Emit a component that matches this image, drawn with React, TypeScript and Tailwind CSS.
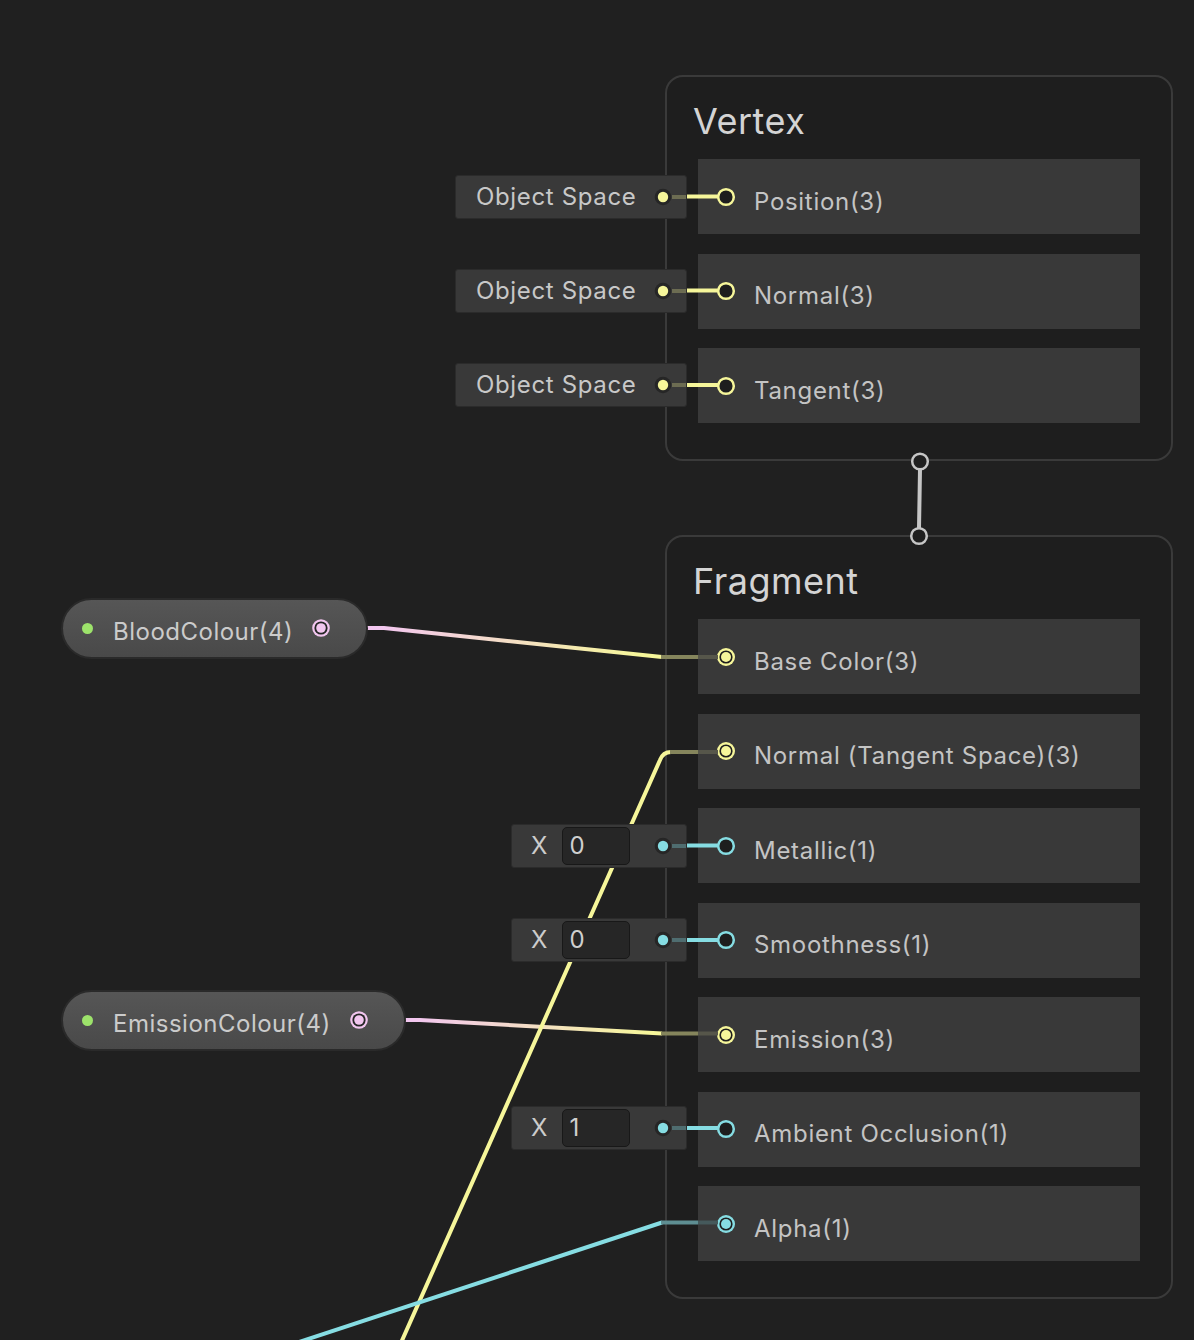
import type { ReactNode } from "react";

type Slot = { label: string; color: string; linked?: boolean };

const YELLOW = "#f6f69a";
const CYAN = "#86dde3";
const PINK = "#f2c6ef";

const vertexSlots: Slot[] = [
  { label: "Position(3)", color: YELLOW },
  { label: "Normal(3)", color: YELLOW },
  { label: "Tangent(3)", color: YELLOW },
];

const fragmentSlots: Slot[] = [
  { label: "Base Color(3)", color: YELLOW, linked: true },
  { label: "Normal (Tangent Space)(3)", color: YELLOW, linked: true },
  { label: "Metallic(1)", color: CYAN },
  { label: "Smoothness(1)", color: CYAN },
  { label: "Emission(3)", color: YELLOW, linked: true },
  { label: "Ambient Occlusion(1)", color: CYAN },
  { label: "Alpha(1)", color: CYAN, linked: true },
];

function PortRing({ color, linked }: { color: string; linked?: boolean }) {
  return (
    <svg width="20" height="20" viewBox="0 0 20 20" className="shrink-0">
      {linked ? (
        <>
          <circle cx="10" cy="10" r="9" fill={color} />
          <circle cx="10" cy="10" r="6.6" fill="#1e1e1e" />
          <circle cx="10" cy="10" r="5" fill={color} />
        </>
      ) : (
        <circle cx="10" cy="10" r="7.8" fill="#1e1e1e" stroke={color} strokeWidth="2.5" />
      )}
    </svg>
  );
}

function OutDot({ color }: { color: string }) {
  return (
    <svg width="18" height="18" viewBox="0 0 18 18" className="shrink-0">
      <circle cx="9" cy="9" r="8.3" fill="#262626" />
      <circle cx="9" cy="9" r="5.2" fill={color} />
    </svg>
  );
}

function Block({ title, slots, pos }: { title: string; slots: Slot[]; pos: string }) {
  return (
    <div className={`absolute ${pos} w-[508px] rounded-[18px] border-2 border-[#3a3a3a] bg-[#1e1e1e] pt-[22px] pb-[36px] px-[31px]`}>
      <div className="-ml-[5px] text-[36px] leading-[44px] text-[#d4d4d4] tracking-[0.5px]">{title}</div>
      <div className="mt-[16px] flex flex-col gap-[19.5px]">
        {slots.map((s) => (
          <div key={s.label} className="h-[75px] bg-[#393939] flex items-center pl-[18px]">
            <PortRing color={s.color} linked={s.linked} />
            <span className="ml-[18px] mt-[10px] text-[24px] leading-none text-[#c4c4c4] tracking-[0.7px]">{s.label}</span>
          </div>
        ))}
      </div>
    </div>
  );
}

function SpaceNode({ pos }: { pos: string }) {
  return (
    <div className={`absolute ${pos} left-[455px] w-[232px] h-[44px] rounded-[3px] border border-[#2b2b2b] bg-[#393939] flex items-center pl-[20px]`}>
      <span className="text-[24px] leading-none text-[#c8c8c8] tracking-[0.65px]">Object Space</span>
      <div className="ml-auto flex items-center">
        <OutDot color={YELLOW} />
        <div className="h-[4px] w-[14px] bg-[#6c6c52]" />
      </div>
    </div>
  );
}

function ValueNode({ pos, value }: { pos: string; value: string }) {
  return (
    <div className={`absolute ${pos} left-[511px] w-[176px] h-[44px] rounded-[3px] border border-[#2b2b2b] bg-[#393939] flex items-center pl-[19px]`}>
      <span className="text-[24px] leading-none text-[#cccccc]">X</span>
      <div className="ml-[15px] h-[38px] w-[68px] rounded-[5px] border border-[#181818] bg-[#262626] flex items-center pl-[6px] text-[24px] text-[#cfcfcf]">
        {value}
      </div>
      <div className="ml-auto flex items-center">
        <OutDot color={CYAN} />
        <div className="h-[4px] w-[14px] bg-[#4f6d70]" />
      </div>
    </div>
  );
}

function PropertyPill({ pos, label, width }: { pos: string; label: string; width: string }) {
  return (
    <div className={`absolute ${pos} left-[61px] ${width} h-[61px] rounded-full border-2 border-[#2a2a2a] bg-gradient-to-b from-[#565656] to-[#494949] flex items-center pl-[19px] pr-[35px]`}>
      <span className="w-[11px] h-[11px] rounded-full bg-[#9de36b] shrink-0" />
      <span className="ml-[20px] mt-[6px] text-[24px] leading-none text-[#cbcbcb] tracking-[0.5px]">{label}</span>
      <svg width="20" height="20" viewBox="0 0 20 20" className="ml-auto shrink-0 -mt-[1px]">
        <circle cx="10" cy="10" r="8.8" fill={PINK} />
        <circle cx="10" cy="10" r="6.6" fill="#262626" />
        <circle cx="10" cy="10" r="4.8" fill={PINK} />
      </svg>
    </div>
  );
}

function Wires(): ReactNode {
  return (
    <svg className="absolute inset-0 pointer-events-none" width="1194" height="1340" viewBox="0 0 1194 1340">
      <defs>
        <linearGradient id="g1" gradientUnits="userSpaceOnUse" x1="380" y1="0" x2="640" y2="0">
          <stop offset="0" stopColor={PINK} />
          <stop offset="1" stopColor={YELLOW} />
        </linearGradient>
        <linearGradient id="g2" gradientUnits="userSpaceOnUse" x1="415" y1="0" x2="650" y2="0">
          <stop offset="0" stopColor={PINK} />
          <stop offset="1" stopColor={YELLOW} />
        </linearGradient>
      </defs>

      {/* vertex stubs */}
      {[196.5, 290.5, 385].map((y) => (
        <line key={y} x1="686" y1={y} x2="719" y2={y} stroke={YELLOW} strokeWidth="4" />
      ))}
      {/* value stubs */}
      {[845.5, 940, 1128].map((y) => (
        <line key={y} x1="686" y1={y} x2="719" y2={y} stroke={CYAN} strokeWidth="4" />
      ))}

      {/* BloodColour -> Base Color */}
      <polyline points="366,628 384,628 662,657" fill="none" stroke="url(#g1)" strokeWidth="4" strokeLinejoin="round" />
      <line x1="661" y1="657" x2="698" y2="657" stroke="#85855c" strokeWidth="4" />
      <line x1="698" y1="657" x2="718" y2="657" stroke="#56564a" strokeWidth="4" />

      {/* EmissionColour -> Emission */}
      <polyline points="404,1020 420,1020 662,1033.5" fill="none" stroke="url(#g2)" strokeWidth="4" strokeLinejoin="round" />
      <line x1="661" y1="1033.5" x2="698" y2="1033.5" stroke="#85855c" strokeWidth="4" />
      <line x1="698" y1="1033.5" x2="718" y2="1033.5" stroke="#56564a" strokeWidth="4" />

      {/* long yellow -> Normal (Tangent Space) */}
      <path d="M400 1345 L660 760 Q663 752 671 752" fill="none" stroke={YELLOW} strokeWidth="4" />
      <line x1="670" y1="752" x2="698" y2="752" stroke="#85855c" strokeWidth="4" />
      <line x1="698" y1="752" x2="718" y2="752" stroke="#56564a" strokeWidth="4" />

      {/* long cyan -> Alpha */}
      <polyline points="290,1345 662,1222.5" fill="none" stroke={CYAN} strokeWidth="4" />
      <line x1="661" y1="1222.5" x2="698" y2="1222.5" stroke="#5e8e92" strokeWidth="4" />
      <line x1="698" y1="1222.5" x2="718" y2="1222.5" stroke="#45595b" strokeWidth="4" />

      {/* vertex -> fragment link */}
      <path d="M920 469 L919.5 500 L919 528" fill="none" stroke="#c6c6c6" strokeWidth="4" />
      <circle cx="920" cy="461.5" r="7.8" fill="#1f1f1f" stroke="#c6c6c6" strokeWidth="2.5" />
      <circle cx="919" cy="536" r="7.8" fill="#1f1f1f" stroke="#c6c6c6" strokeWidth="2.5" />
    </svg>
  );
}

export default function App() {
  return (
    <div className="relative w-[1194px] h-[1340px] overflow-hidden bg-[#202020] font-['Inter','Noto_Sans',sans-serif]">
      <Block title="Vertex" slots={vertexSlots} pos="left-[665px] top-[75px]" />
      <Block title="Fragment" slots={fragmentSlots} pos="left-[665px] top-[535px]" />

      <Wires />

      <SpaceNode pos="top-[174.5px]" />
      <SpaceNode pos="top-[268.5px]" />
      <SpaceNode pos="top-[363px]" />

      <ValueNode pos="top-[823.5px]" value="0" />
      <ValueNode pos="top-[918px]" value="0" />
      <ValueNode pos="top-[1106px]" value="1" />

      <PropertyPill pos="top-[598px]" label="BloodColour(4)" width="w-[307px]" />
      <PropertyPill pos="top-[990px]" label="EmissionColour(4)" width="w-[345px]" />
    </div>
  );
}
